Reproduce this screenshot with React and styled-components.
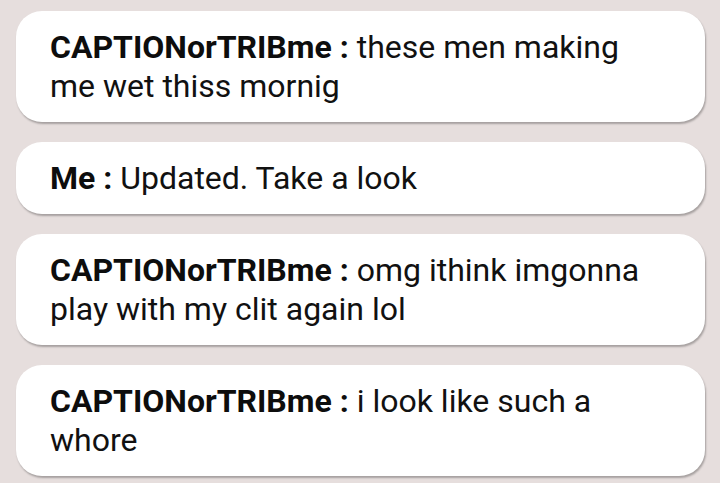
import React from "react";
import styled, { createGlobalStyle } from "styled-components";

const Global = createGlobalStyle`
  html, body { margin: 0; padding: 0; background: #e6dedd; }
  body { font-family: Roboto, "Noto Sans", "Liberation Sans", sans-serif; }
`;

const List = styled.div`
  display: flex;
  flex-direction: column;
  gap: 20px;
  padding: 11px 15px 6px 16px;
  width: 720px;
  box-sizing: border-box;
`;

const Bubble = styled.div`
  background: #ffffff;
  border-radius: 26px;
  padding: 17px 58px 16px 34px;
  box-shadow: 1px 2px 2px rgba(0, 0, 0, 0.28);
  font-size: 32px;
  line-height: 39px;
  color: #111111;
`;

const Name = styled.span`
  font-weight: 700;
  color: #0d0d0d;
`;

const messages = [
  { from: "CAPTIONorTRIBme", text: "these men making me wet thiss mornig" },
  { from: "Me", text: "Updated. Take a look" },
  { from: "CAPTIONorTRIBme", text: "omg ithink imgonna play with my clit again lol" },
  { from: "CAPTIONorTRIBme", text: "i look like such a whore" },
];

export default function App() {
  return (
    <>
      <Global />
      <List>
        {messages.map((m, i) => (
          <Bubble key={i}>
            <Name>{m.from} :</Name> {m.text}
          </Bubble>
        ))}
      </List>
    </>
  );
}
